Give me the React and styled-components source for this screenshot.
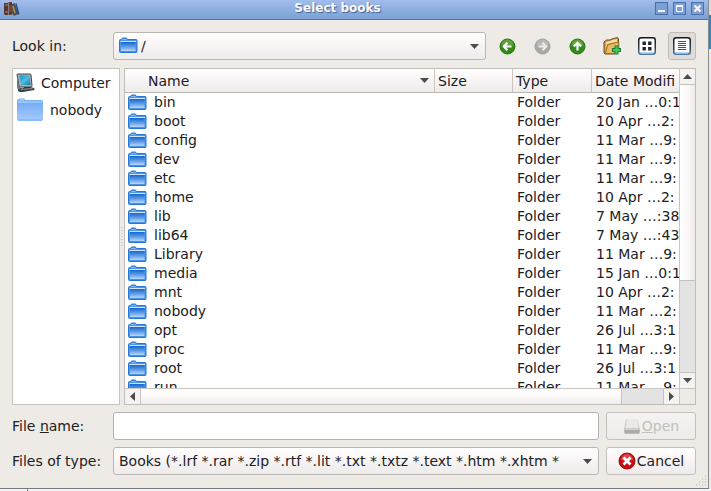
import React, { useState } from 'react';
import styled, { createGlobalStyle, css } from 'styled-components';

const GlobalStyle = createGlobalStyle`
  * {
    box-sizing: border-box;
  }

  body {
    margin: 0;
    background: #f4f8fb;
  }

  body, button, input, select {
    font-family: 'DejaVu Sans', sans-serif;
    font-size: 14px;
    color: #1c201e;
  }

  svg {
    display: block;
    flex: none;
  }
`;

const raised = css`
  background: linear-gradient(#ffffff, #fdf8f8 30%, #f4f1f2 65%, #eeebea);
`;

// Desktop and window frame
const Desktop = styled.div`
  display: flex;
  flex-direction: column;
  min-height: 100vh;
`;

const Stage = styled.div`
  display: flex;
  flex: 1;
`;

const DesktopEdge = styled.div`
  width: 2px;
  background: linear-gradient(#dedcd9 15px, #1e8bd0 15px, #1e8bd0 49px, #eceaea 49px);
`;

const DesktopFloor = styled.div`
  height: 2px;
  background: linear-gradient(90deg, #f1f5f9 27px, #77787c 27px, #77787c 28px, #f1f5f9 28px);
`;

const Window = styled.div`
  display: flex;
  flex-direction: column;
  flex: 1;
  min-width: 0;
  background: #eeebe7;
  border-right: 1px solid #8b8a8b;
  border-bottom: 1px solid #7b7a79;
`;

const TitleBar = styled.header`
  display: flex;
  align-items: flex-start;
  height: 20px;
  padding: 2px 4px 0 4px;
  background: linear-gradient(#a3bdec, #8daee0 50%, #7ba3d6);
  border-bottom: 1px solid #4f74a8;
`;

const Title = styled.h1`
  flex: 1;
  margin: 0;
  color: #f8faff;
  font-size: 12px;
  line-height: 13px;
  text-align: center;
  text-shadow: 1px 1px 1px #46628f;
`;

const WindowButtons = styled.div`
  display: flex;
  gap: 5px;
`;

const WindowButton = styled.button`
  width: 13px;
  height: 13px;
  padding: 0;
  background: #7c9fd6;
  border: 1px solid #4b6ea9;
`;

// Form rows
const Dialog = styled.form`
  display: flex;
  flex-direction: column;
  flex: 1;
  padding: 12px 12px 0 12px;
`;

const TopRow = styled.div`
  display: grid;
  grid-template-columns: 101px 1fr auto;
  align-items: center;
  margin-bottom: 8px;
`;

const BottomRows = styled.div`
  display: grid;
  grid-template-columns: 101px 1fr 97px;
  align-items: center;
  row-gap: 7px;
  margin-top: 7px;
`;

const Label = styled.label`
  white-space: nowrap;
`;

const Combo = styled.div`
  position: relative;
  min-width: 0;
`;

const Select = styled.select`
  display: block;
  width: 100%;
  height: 28px;
  padding: 0 24px 0 ${props => (props.$withIcon ? '27px' : '5px')};
  ${raised}
  border: 1px solid #bab6b2;
  border-radius: 3px;
  appearance: none;
  outline: none;
`;

const ComboArrow = styled.span`
  position: absolute;
  top: 12px;
  right: 7px;
  pointer-events: none;
`;

const ComboIcon = styled.span`
  position: absolute;
  top: 5px;
  left: 6px;
  pointer-events: none;
`;

const ToolBar = styled.div`
  display: flex;
  gap: 7px;
  margin-left: 7px;
`;

const ToolButton = styled.button`
  display: flex;
  align-items: center;
  justify-content: center;
  width: 28px;
  height: 28px;
  padding: 0;
  background: ${props => (props.$pressed ? '#dfdbd8' : 'transparent')};
  border: 1px solid ${props => (props.$pressed ? '#c2bdb9' : 'transparent')};
  border-radius: 3px;
`;

const TextInput = styled.input`
  width: 100%;
  height: 28px;
  padding: 0 5px;
  background: #ffffff;
  border: 1px solid #b5b2ae;
  border-radius: 3px;
  outline: none;
`;

const ActionButton = styled.button`
  display: flex;
  align-items: center;
  justify-content: center;
  gap: 1px;
  height: 28px;
  margin-left: 7px;
  padding: 0;
  ${raised}
  border: 1px solid #c4bfbb;
  border-radius: 3px;

  &:disabled {
    color: #bdc3ba;
    background: linear-gradient(#f6f2f1, #efebea);
  }
`;

// Panels
const Panels = styled.div`
  display: flex;
  flex: 1;
`;

const Sidebar = styled.nav`
  width: 108px;
  padding: 0 3px;
  background: #ffffff;
  border: 1px solid #c6c2bf;
  overflow: hidden;
`;

const Place = styled.a`
  display: flex;
  align-items: center;
  gap: ${props => props.$gap};
  height: 27px;
  color: inherit;
  text-decoration: none;
`;

const Splitter = styled.div`
  display: flex;
  align-items: center;
  justify-content: center;
  width: 4px;
`;

const FileView = styled.div`
  display: grid;
  grid-template-columns: 1fr 15px;
  grid-template-rows: 1fr 15px;
  gap: 1px;
  flex: 1;
  min-width: 0;
  background: #c9c5c1;
  border: 1px solid #c0bcb8;
`;

const Viewport = styled.div`
  height: 0;
  min-height: 100%;
  background: #ffffff;
  overflow: hidden;
`;

const Table = styled.table`
  width: 100%;
  table-layout: fixed;
  border-collapse: separate;
  border-spacing: 0;
  white-space: nowrap;
`;

const HeaderCell = styled.th`
  height: 24px;
  padding: 0 0 0 ${props => (props.$first ? '23px' : '3px')};
  ${raised}
  border-right: 1px solid #cbc4c1;
  border-bottom: 1px solid #b9b8ae;
  font-weight: normal;
  text-align: left;
  overflow: hidden;

  &:last-child {
    border-right: 0;
  }
`;

const HeaderContent = styled.div`
  display: flex;
  align-items: center;
  justify-content: space-between;
  padding-right: 5px;
`;

const Cell = styled.td`
  height: 19px;
  padding: 0 0 0 ${props => (props.$first ? '3px' : '4px')};
  line-height: 19px;
  overflow: hidden;
`;

const FileName = styled.div`
  display: flex;
  align-items: center;
  gap: 7px;
`;

const ScrollBar = styled.div`
  display: flex;
  flex-direction: ${props => (props.$vertical ? 'column' : 'row')};
  min-width: 0;
  min-height: 0;
  background: #e4e3e3;
`;

const ScrollArrow = styled.button`
  display: flex;
  align-items: center;
  justify-content: center;
  flex: none;
  width: 15px;
  height: 15px;
  padding: 0;
  background: #f5f3f2;
  border: 0;
`;

const Thumb = styled.div`
  flex: ${props => props.$size};
  background: linear-gradient(${props => (props.$vertical ? '90deg' : '180deg')}, #ffffff, #fbf8f8 50%, #efecec);
  border: solid #c5c1be;
  border-width: ${props => (props.$vertical ? '1px 0' : '0 1px')};
`;

const Track = styled.div`
  flex: ${props => props.$size};
`;

const TrackEnd = styled.div`
  flex: none;
  background: #c5c1be;
  ${props => (props.$vertical ? 'height: 1px;' : 'width: 1px;')}
`;

const Corner = styled.div`
  background: #eeebe7;
`;

const StatusLine = styled.footer`
  display: flex;
  justify-content: flex-end;
  height: 13px;
  margin-right: -11px;
`;

// Icons
const FolderIcon = () => (
  <svg width="19" height="17" viewBox="0 0 19 17">
    <defs>
      <linearGradient id="folderFace" x1="0" y1="0" x2="0" y2="1">
        <stop offset="0" stopColor="#1766c9" />
        <stop offset="0.5" stopColor="#5a9ae6" />
        <stop offset="1" stopColor="#b9d6f8" />
      </linearGradient>
    </defs>
    <path d="M0.5 14.5V3.5Q0.5 2.5 1.5 2.5H2.5Q3 1 4 1H7Q8 1 8.5 2.5H17Q18 2.5 18 3.5V14.5Q18 15.5 17 15.5H1.5Q0.5 15.5 0.5 14.5Z" fill="#4b96ea" stroke="#2478d6" />
    <path d="M3.5 2.5H7.5" stroke="#84b8f2" />
    <path d="M1.5 4.5H17" stroke="#cfe4fb" />
    <path d="M2 5H16.5V14H2Z" fill="url(#folderFace)" />
    <path d="M1.5 14.5H17" stroke="#4793e8" />
  </svg>
);

const HomeFolderIcon = () => (
  <svg width="28" height="25" viewBox="0 0 28 25">
    <defs>
      <linearGradient id="homeFace" x1="0" y1="0" x2="0" y2="1">
        <stop offset="0" stopColor="#79acf4" />
        <stop offset="1" stopColor="#a5cbff" />
      </linearGradient>
    </defs>
    <path d="M1 5V3.5Q1 2.5 2 2.5L3 1.5H8L9.5 3H25.5Q27 3 27 4.5V8H1Z" fill="#78b3f4" />
    <path d="M3.5 3H8" stroke="#b7d8fc" />
    <path d="M2 5H26" stroke="#b5d4f8" strokeWidth="1" />
    <path d="M1 6H27V22Q27 24 25 24H3Q1 24 1 22Z" fill="url(#homeFace)" />
    <path d="M2 23H26" stroke="#79b8ff" strokeWidth="1.4" />
  </svg>
);

const ComputerIcon = () => (
  <svg width="20" height="20" viewBox="0 0 20 20">
    <defs>
      <linearGradient id="screenGlow" x1="0" y1="0" x2="1" y2="1">
        <stop offset="0" stopColor="#1a92c8" />
        <stop offset="0.5" stopColor="#48bce2" />
        <stop offset="1" stopColor="#127eac" />
      </linearGradient>
    </defs>
    <path d="M1 1.5Q1 1 2 1L14 1Q15 1 15 2L16 12.5Q16 14 15 14H4Q3 14 3 13Z" fill="#a9b0b0" stroke="#3f474a" />
    <path d="M3.5 2.5H13.5L14.5 12H5Z" fill="url(#screenGlow)" />
    <path d="M1 3L3 13L5 15V18H3L1 15Z" fill="#737c7d" />
    <path d="M8 14H15L16 16H7Z" fill="#303838" />
    <path d="M2 16.5L5 15.2L16.5 14.5L18.5 15.5V17L7 19H4L2 18Z" fill="#3b4344" />
    <path d="M5 16.5L16.5 15.5" stroke="#899192" />
  </svg>
);

const BooksIcon = () => (
  <svg width="16" height="15" viewBox="0 0 16 15">
    <path d="M0 1H4V13H1L0 12Z" fill="#57382e" />
    <path d="M1 3H4M1 10H4" stroke="#b18252" />
    <path d="M4.5 0H8V13H4.5Z" fill="#81422b" />
    <path d="M5 2H8M5 11H8" stroke="#31262a" />
    <path d="M8 2L11 1L14 12L10 14L8 11Z" fill="#4d514b" />
    <path d="M9 4L11 11" stroke="#c69b50" strokeWidth="1.3" />
    <path d="M11.5 2L12.5 1L15.5 12L13.5 13Z" fill="#244e87" />
  </svg>
);

const arrowPaths = {
  left: 'M12.5 8.5H5M8.5 4.8L4.8 8.5L8.5 12.2',
  right: 'M4.5 8.5H12M8.5 4.8L12.2 8.5L8.5 12.2',
  up: 'M8.5 12.5V5M4.8 8.5L8.5 4.8L12.2 8.5',
};

const RoundArrow = ({ direction, muted }) => (
  <svg width="17" height="17" viewBox="0 0 17 17">
    <circle cx="8.5" cy="8.5" r="7.5" fill={muted ? '#a9a8a6' : '#348a18'} stroke={muted ? '#a09f9d' : '#2a7214'} />
    <path d="M2.5 7.5A6 6 0 0 1 14.5 7.5Q8.5 8.5 2.5 7.5Z" fill={muted ? '#b9b8b6' : '#5da53b'} />
    <path d={arrowPaths[direction]} fill="none" stroke={muted ? '#eeeceb' : '#ffffff'} strokeWidth="2.2" />
  </svg>
);

const NewFolderIcon = () => (
  <svg width="20" height="20" viewBox="0 0 20 20">
    <path d="M2 17V6L4.5 4H8L10 3L15.5 1.5L16.5 3V12L12.5 18H3Z" fill="#d69a45" stroke="#6b4d20" />
    <path d="M4 6L8 5L10 4L15 3V6L5 8L3.5 15Z" fill="#f6dc9d" />
    <path d="M5.5 9L10 7.5L16.8 6V13L12.5 17.5H3.5Z" fill="#ebb965" stroke="#9c6d2c" />
    <path d="M14.5 9.5V18.5M10 14H19" stroke="#147d36" strokeWidth="4" />
    <path d="M14.5 10.5V17.5M11 14H18" stroke="#43c956" strokeWidth="2.2" />
  </svg>
);

const ViewFrame = ({ children }) => (
  <svg width="18" height="18" viewBox="0 0 18 18">
    <defs>
      <linearGradient id="viewFrame" x1="0" y1="0" x2="0" y2="1">
        <stop offset="0" stopColor="#10181d" />
        <stop offset="0.65" stopColor="#39434b" />
        <stop offset="1" stopColor="#4b78a8" />
      </linearGradient>
    </defs>
    <rect x="0.75" y="0.75" width="16.5" height="16.5" rx="2.5" fill="#ffffff" stroke="url(#viewFrame)" strokeWidth="1.5" />
    <path d="M2 15.5H16" stroke="#b4d4f3" />
    {children}
  </svg>
);

const FolderRows = () => (
  <path d="M5 4.5H13M5 6.5H13M5 8.5H13M5 10.5H13M5 12.5H13" stroke="#4b4e4f" />
);

const IconGrid = () => (
  <path d="M4.5 4.5h3.4v3.4H4.5zM10.1 4.5h3.4v3.4h-3.4zM4.5 10h3.4v3.4H4.5zM10.1 10h3.4v3.4h-3.4z" fill="#202628" />
);

const trianglePaths = {
  down: 'M0 2H9L4.5 7Z',
  up: 'M0 7H9L4.5 2Z',
  left: 'M7 0V9L2 4.5Z',
  right: 'M2 0V9L7 4.5Z',
};

const Triangle = ({ direction }) => (
  <svg width="9" height="9" viewBox="0 0 9 9">
    <path d={trianglePaths[direction]} fill="#4b4b4b" />
  </svg>
);

const SmallDown = () => (
  <svg width="9" height="5" viewBox="0 0 9 5">
    <path d="M0 0H9L4.5 5Z" fill="#4b4c4b" />
  </svg>
);

const DriveIcon = () => (
  <svg width="18" height="17" viewBox="0 0 18 17">
    <path d="M3 1H14L17 11V14Q17 16 15 16H3Q1 16 1 14V11Z" fill="#cfcac8" />
    <path d="M4 1H14L15.5 10H2.5Z" fill="#ebe8e7" />
    <path d="M1.5 11H16.5V14Q16.5 15.5 15 15.5H3Q1.5 15.5 1.5 14Z" fill="#aeaaa8" />
    <path d="M2 11.5H16" stroke="#d6d2d0" />
  </svg>
);

const CancelIcon = () => (
  <svg width="18" height="18" viewBox="0 0 18 18">
    <circle cx="9" cy="9" r="8" fill="#c80d12" stroke="#a9070c" />
    <path d="M3 8A6 6 0 0 1 15 8Q9 10 3 8Z" fill="#de4548" />
    <path d="M5.5 5.5L12.5 12.5M12.5 5.5L5.5 12.5" stroke="#ffffff" strokeWidth="2.8" />
  </svg>
);

const SplitterDots = () => (
  <svg width="2" height="20" viewBox="0 0 2 20">
    <path d="M1 0V20" stroke="#bbb7b3" strokeDasharray="1 2" />
  </svg>
);

const SizeGrip = () => (
  <svg width="12" height="12" viewBox="0 0 12 12">
    <path d="M10 1h1M7 4h4M4 7h7M1 10h10" stroke="#b3afac" strokeDasharray="1 2" />
  </svg>
);

const files = [
  { name: 'bin', date: '20 Jan …0:1' },
  { name: 'boot', date: '10 Apr …2:' },
  { name: 'config', date: '11 Mar …9:' },
  { name: 'dev', date: '11 Mar …9:' },
  { name: 'etc', date: '11 Mar …9:' },
  { name: 'home', date: '10 Apr …2:' },
  { name: 'lib', date: '7 May …:38' },
  { name: 'lib64', date: '7 May …:43' },
  { name: 'Library', date: '11 Mar …9:' },
  { name: 'media', date: '15 Jan …0:1' },
  { name: 'mnt', date: '10 Apr …2:' },
  { name: 'nobody', date: '11 Mar …2:' },
  { name: 'opt', date: '26 Jul …3:1' },
  { name: 'proc', date: '11 Mar …9:' },
  { name: 'root', date: '26 Jul …3:1' },
  { name: 'run', date: '11 Mar …9:' },
];

function App() {
  const [fileName, setFileName] = useState('');
  const [detailView, setDetailView] = useState(true);

  return (
    <Desktop>
      <GlobalStyle />
      <Stage>
        <Window>
          <TitleBar>
            <BooksIcon />
            <Title>Select books</Title>
            <WindowButtons>
              <WindowButton aria-label="Minimize">
                <svg width="11" height="11"><path d="M2 8H9" stroke="#f2f7ff" strokeWidth="2" /></svg>
              </WindowButton>
              <WindowButton aria-label="Maximize">
                <svg width="11" height="11"><path d="M2 3H9" stroke="#f2f7ff" strokeWidth="2" /><path d="M2.5 3V8.5H8.5V3" fill="none" stroke="#f2f7ff" /></svg>
              </WindowButton>
              <WindowButton aria-label="Close">
                <svg width="11" height="11"><path d="M2.5 2.5L8.5 8.5M8.5 2.5L2.5 8.5" stroke="#f2f7ff" strokeWidth="2.4" /></svg>
              </WindowButton>
            </WindowButtons>
          </TitleBar>

          <Dialog onSubmit={(event) => event.preventDefault()}>
            <TopRow>
              <Label htmlFor="look-in">Look in:</Label>
              <Combo>
                <Select id="look-in" $withIcon>
                  <option>/</option>
                </Select>
                <ComboIcon><FolderIcon /></ComboIcon>
                <ComboArrow><SmallDown /></ComboArrow>
              </Combo>
              <ToolBar>
                <ToolButton type="button" aria-label="Back"><RoundArrow direction="left" /></ToolButton>
                <ToolButton type="button" aria-label="Forward" disabled><RoundArrow direction="right" muted /></ToolButton>
                <ToolButton type="button" aria-label="Parent directory"><RoundArrow direction="up" /></ToolButton>
                <ToolButton type="button" aria-label="New folder"><NewFolderIcon /></ToolButton>
                <ToolButton type="button" aria-label="List view" $pressed={!detailView} onClick={() => setDetailView(false)}>
                  <ViewFrame><IconGrid /></ViewFrame>
                </ToolButton>
                <ToolButton type="button" aria-label="Detail view" $pressed={detailView} onClick={() => setDetailView(true)}>
                  <ViewFrame><FolderRows /></ViewFrame>
                </ToolButton>
              </ToolBar>
            </TopRow>

            <Panels>
              <Sidebar>
                <Place href="#computer" $gap="5px"><ComputerIcon />Computer</Place>
                <Place href="#nobody" $gap="6px"><HomeFolderIcon />nobody</Place>
              </Sidebar>
              <Splitter><SplitterDots /></Splitter>
              <FileView>
                <Viewport>
                  <Table>
                    <colgroup>
                      <col />
                      <col width="78" />
                      <col width="79" />
                      <col width="87" />
                    </colgroup>
                    <thead>
                      <tr>
                        <HeaderCell $first><HeaderContent>Name<SmallDown /></HeaderContent></HeaderCell>
                        <HeaderCell>Size</HeaderCell>
                        <HeaderCell>Type</HeaderCell>
                        <HeaderCell>Date Modifi</HeaderCell>
                      </tr>
                    </thead>
                    <tbody>
                      {files.map((file) => (
                        <tr key={file.name}>
                          <Cell $first><FileName><FolderIcon />{file.name}</FileName></Cell>
                          <Cell />
                          <Cell>Folder</Cell>
                          <Cell>{file.date}</Cell>
                        </tr>
                      ))}
                    </tbody>
                  </Table>
                </Viewport>
                <ScrollBar $vertical>
                  <ScrollArrow type="button" aria-label="Scroll up"><Triangle direction="up" /></ScrollArrow>
                  <Thumb $vertical $size={196} />
                  <Track $size={92} />
                  <TrackEnd $vertical />
                  <ScrollArrow type="button" aria-label="Scroll down"><Triangle direction="down" /></ScrollArrow>
                </ScrollBar>
                <ScrollBar>
                  <ScrollArrow type="button" aria-label="Scroll left"><Triangle direction="left" /></ScrollArrow>
                  <Thumb $size={482} />
                  <Track $size={41} />
                  <TrackEnd />
                  <ScrollArrow type="button" aria-label="Scroll right"><Triangle direction="right" /></ScrollArrow>
                </ScrollBar>
                <Corner />
              </FileView>
            </Panels>

            <BottomRows>
              <Label htmlFor="file-name">File <u>n</u>ame:</Label>
              <TextInput id="file-name" value={fileName} onChange={(event) => setFileName(event.target.value)} />
              <ActionButton type="submit" disabled={!fileName}>
                <DriveIcon /><span><u>O</u>pen</span>
              </ActionButton>
              <Label htmlFor="file-type">Files of type:</Label>
              <Combo>
                <Select id="file-type">
                  <option>Books (*.lrf *.rar *.zip *.rtf *.lit *.txt *.txtz *.text *.htm *.xhtm *</option>
                </Select>
                <ComboArrow><SmallDown /></ComboArrow>
              </Combo>
              <ActionButton type="button"><CancelIcon />Cancel</ActionButton>
            </BottomRows>
            <StatusLine><SizeGrip /></StatusLine>
          </Dialog>
        </Window>
        <DesktopEdge />
      </Stage>
      <DesktopFloor />
    </Desktop>
  );
}

export default App;
